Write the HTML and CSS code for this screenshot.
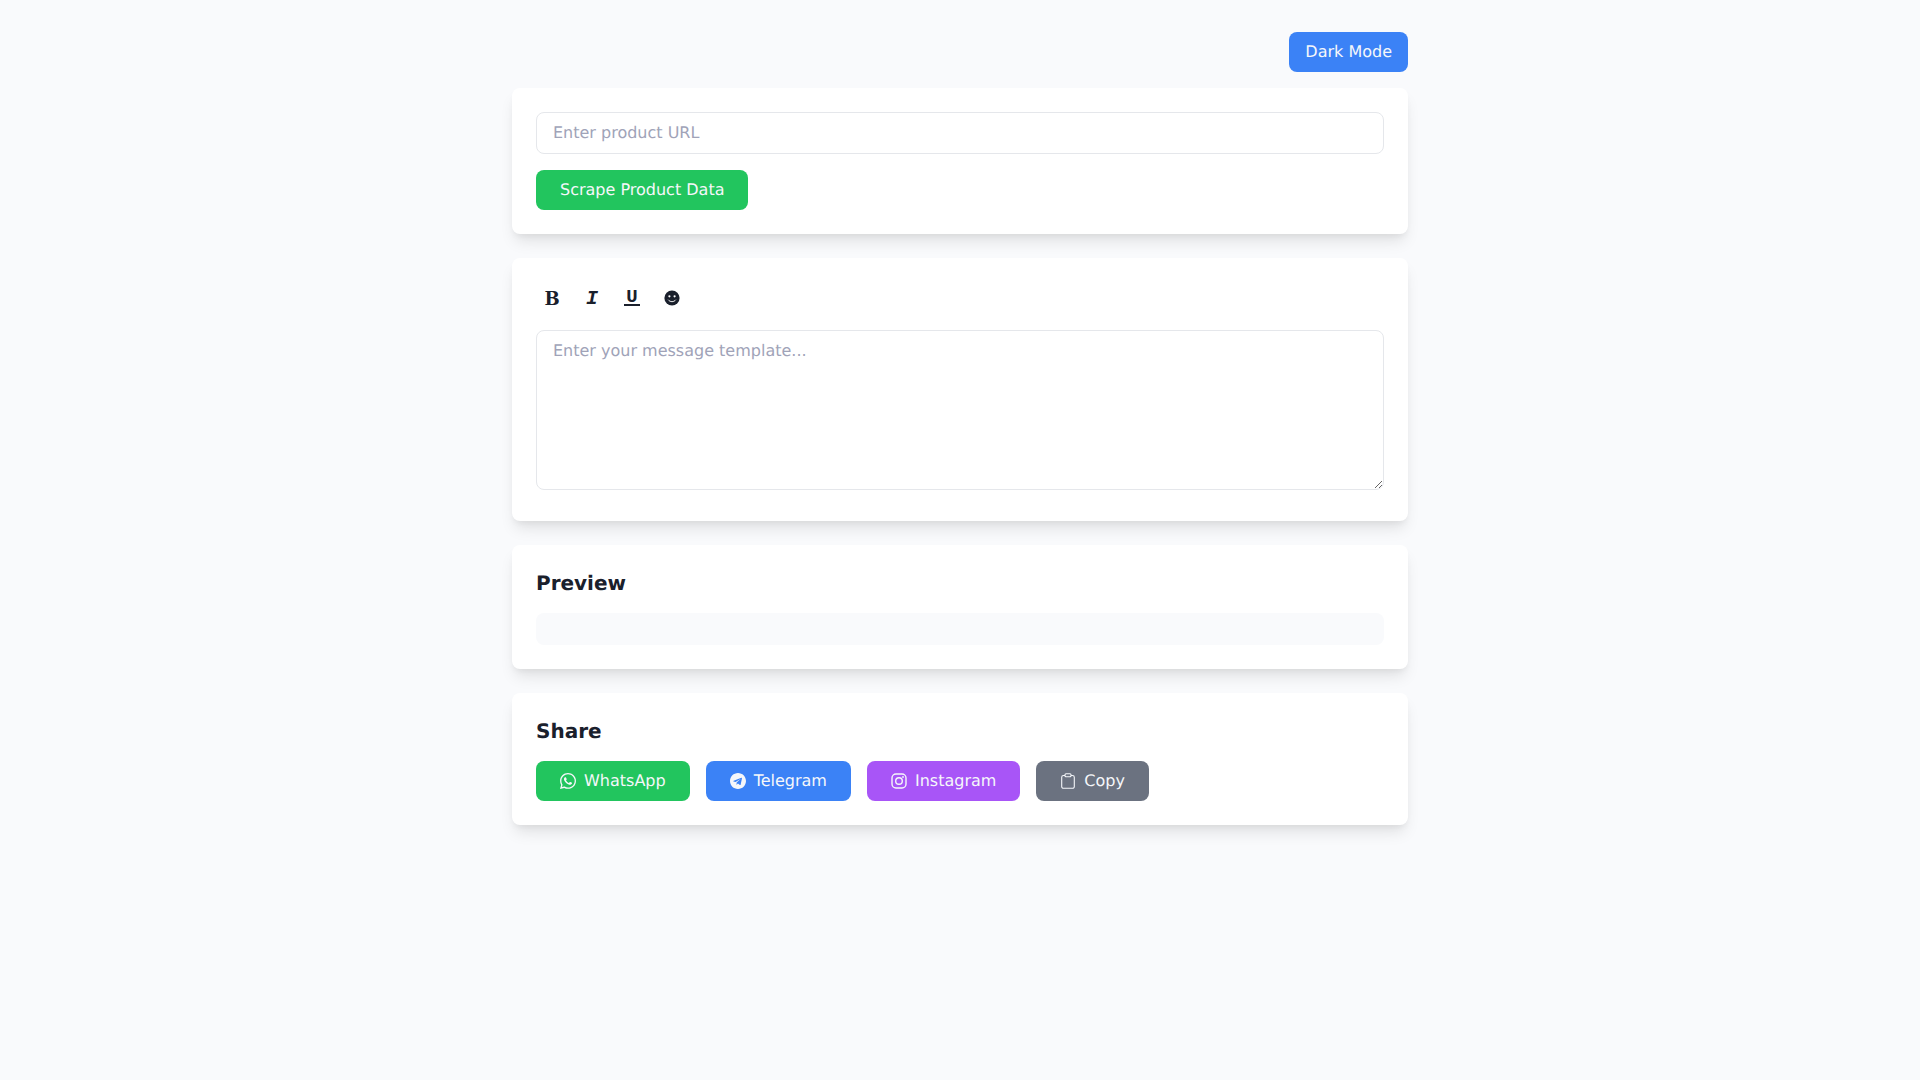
FILE: index.html
```html
<!DOCTYPE html>
<html lang="en">
<head>
    <meta charset="UTF-8">
    <meta name="viewport" content="width=device-width, initial-scale=1.0">
    <title>Product Message Composer</title>
    <link rel="stylesheet" href="styles.css">
</head>
<body>
    <div class="container">
        <!-- Theme toggle -->
        <div class="topbar">
            <button class="btn btn-blue btn-theme">Dark Mode</button>
        </div>

        <!-- Scraper -->
        <div class="card">
            <input class="field url-field" type="text" placeholder="Enter product URL">
            <button class="btn btn-green">Scrape Product Data</button>
        </div>

        <!-- Template editor -->
        <div class="card">
            <div class="toolbar">
                <button class="tool"><span class="tool-glyph glyph-bold">B</span></button>
                <button class="tool"><span class="tool-glyph glyph-italic">I</span></button>
                <button class="tool"><span class="tool-glyph glyph-underline">U</span></button>
                <button class="tool">
                    <svg class="icon" viewBox="0 0 16 16">
                        <circle cx="8" cy="8" r="7.6"/>
                        <circle class="face" cx="5.4" cy="6.3" r="1.1"/>
                        <circle class="face" cx="10.6" cy="6.3" r="1.1"/>
                        <path class="smile" d="M4.200 9.700C6 12.300 10 12.300 11.800 9.700"/>
                    </svg>
                </button>
            </div>
            <textarea class="field template-field" placeholder="Enter your message template..."></textarea>
        </div>

        <!-- Preview -->
        <div class="card">
            <h2>Preview</h2>
            <div class="preview-box"></div>
        </div>

        <!-- Share -->
        <div class="card">
            <h2>Share</h2>
            <div class="share-row">
                <button class="btn btn-green btn-share">
                    <svg class="icon" viewBox="0 32 448 448"><path d="M380.900 97.100C339 55.100 283.200 32 223.900 32c-122.400 0-222 99.600-222 222 0 39.100 10.200 77.300 29.600 111L0 480l117.700-30.900c32.400 17.700 68.900 27 106.100 27h.1c122.300 0 224.100-99.600 224.100-222 0-59.300-25.200-115-67.100-157zm-157 341.600c-33.200 0-65.700-8.900-94-25.700l-6.700-4-69.800 18.300L72 359.200l-4.400-7c-18.500-29.400-28.200-63.300-28.200-98.200 0-101.700 82.800-184.500 184.600-184.500 49.300 0 95.600 19.200 130.400 54.100 34.800 34.900 56.200 81.200 56.100 130.500 0 101.800-84.900 184.600-186.600 184.600zm101.200-138.200c-5.500-2.800-32.800-16.200-37.900-18-5.100-1.900-8.800-2.800-12.500 2.800-3.700 5.600-14.300 18-17.600 21.800-3.200 3.700-6.500 4.200-12 1.400-32.600-16.300-54-29.100-75.500-66-5.700-9.800 5.700-9.100 16.300-30.300 1.800-3.700.9-6.900-.5-9.700-1.400-2.800-12.500-30.100-17.100-41.200-4.500-10.800-9.100-9.300-12.500-9.500-3.200-.2-6.900-.2-10.600-.2-3.700 0-9.700 1.400-14.800 6.900-5.100 5.600-19.400 19-19.400 46.300 0 27.300 19.900 53.700 22.600 57.400 2.800 3.700 39.100 59.700 94.800 83.800 35.200 15.200 49 16.500 66.600 13.900 10.700-1.600 32.800-13.400 37.400-26.400 4.600-13 4.600-24.100 3.200-26.400-1.300-2.500-5-3.900-10.500-6.600z"/></svg>
                    WhatsApp
                </button>
                <button class="btn btn-blue btn-share">
                    <svg class="icon" viewBox="0 8 496 496"><path d="M248 8C111 8 0 119 0 256s111 248 248 248 248-111 248-248S385 8 248 8zm121.800 169.900l-40.700 191.800c-3 13.600-11.100 16.900-22.400 10.500l-62-45.700-29.900 28.800c-3.300 3.300-6.100 6.100-12.500 6.100l4.400-63.100 114.900-103.800c5-4.400-1.100-6.900-7.700-2.500l-142 89.400-61.200-19.100c-13.300-4.200-13.600-13.300 2.800-19.700l239.100-92.200c11.100-4 20.800 2.700 17.200 19.500z"/></svg>
                    Telegram
                </button>
                <button class="btn btn-purple btn-share">
                    <svg class="icon icon-line" viewBox="0 0 16 16">
                        <rect x="1" y="1" width="14" height="14" rx="4"/>
                        <circle cx="8" cy="8" r="3.3"/>
                        <circle class="dot" cx="12" cy="4" r="0.9"/>
                    </svg>
                    Instagram
                </button>
                <button class="btn btn-gray btn-share">
                    <svg class="icon icon-line icon-thin" viewBox="0 0 16 16">
                        <rect x="5" y="0.7" width="6" height="3" rx="1"/>
                        <path d="M5 2.500H3.500A1.800 1.800 0 0 0 1.700 4.300V13.500A1.800 1.800 0 0 0 3.500 15.300H12.500A1.800 1.800 0 0 0 14.300 13.500V4.300A1.800 1.800 0 0 0 12.500 2.500H11"/>
                    </svg>
                    Copy
                </button>
            </div>
        </div>
    </div>
</body>
</html>
```

FILE: styles.css
```css
body {
    font-family: "DejaVu Sans", sans-serif;
    font-size: 16px;
    line-height: 24px;
    margin: 0;
    background-color: #f9fafc;
    color: #1a202c;
    text-rendering: geometricPrecision;
}

.container {
    width: 896px;
    margin: 0 auto;
    padding: 32px 0;
}

.topbar {
    display: flex;
    justify-content: flex-end;
    margin-bottom: 16px;
}

/* Cards */
.card {
    background: #fff;
    border-radius: 8px;
    padding: 24px;
    margin-bottom: 24px;
    box-shadow: 0 10px 15px -3px rgba(0, 0, 0, 0.1), 0 4px 6px -2px rgba(0, 0, 0, 0.05);
}

.card h2 {
    font-size: 20px;
    line-height: 28px;
    font-weight: 700;
    margin: 0 0 16px;
}

/* Buttons */
.btn {
    display: inline-flex;
    align-items: center;
    height: 40px;
    padding: 8px 24px;
    border: none;
    border-radius: 8px;
    color: #f5f7fa;
    font-family: inherit;
    font-size: 16px;
    line-height: 24px;
    text-rendering: inherit;
    cursor: pointer;
}

.btn-theme {
    padding: 8px 16px;
}

.btn-green {
    background: #22c55e;
}

.btn-blue {
    background: #3b82f6;
}

.btn-purple {
    background: #a855f7;
}

.btn-gray {
    background: #6b7280;
}

.btn-share {
    gap: 8px;
}

.icon {
    display: block;
    width: 16px;
    height: 16px;
    fill: currentColor;
}

.icon-line {
    fill: none;
    stroke: currentColor;
    stroke-width: 1.4;
}

.icon-thin {
    stroke-width: 1.1;
}

.icon-line .dot {
    fill: currentColor;
    stroke: none;
}

.icon .face {
    fill: #fff;
}

.icon .smile {
    fill: none;
    stroke: #fff;
    stroke-width: 0.9;
}

/* Form fields */
.field {
    box-sizing: border-box;
    width: 100%;
    padding: 8px 16px;
    border: 1px solid #e5e7eb;
    border-radius: 8px;
    background: #fff;
    color: #1a202c;
    font-family: inherit;
    font-size: 16px;
    line-height: 24px;
    text-rendering: inherit;
}

.field::placeholder {
    color: #a0a3b8;
    opacity: 1;
}

.url-field {
    display: block;
    margin-bottom: 16px;
}

.template-field {
    display: block;
    height: 160px;
    margin-bottom: 7px;
}

/* Editor toolbar */
.toolbar {
    display: flex;
    gap: 8px;
    margin-bottom: 16px;
}

.tool {
    width: 32px;
    height: 32px;
    padding: 8px;
    border: none;
    border-radius: 4px;
    background: transparent;
    color: #1a202c;
    cursor: pointer;
}

.tool-glyph {
    display: block;
    width: 16px;
    height: 16px;
    font-family: "Liberation Mono", monospace;
    font-size: 20px;
    font-weight: 700;
    line-height: 18px;
    text-align: center;
}

.glyph-bold {
    font-family: "DejaVu Serif", serif;
    font-size: 18px;
}

.glyph-italic {
    font-style: italic;
}

.glyph-underline {
    box-sizing: border-box;
    font-size: 19px;
    line-height: 13px;
    height: 15px;
    border-bottom: 2px solid #1a202c;
}

/* Preview and share */
.preview-box {
    height: 32px;
    border-radius: 8px;
    background: #f9fafc;
}

.share-row {
    display: flex;
    gap: 16px;
}
```
